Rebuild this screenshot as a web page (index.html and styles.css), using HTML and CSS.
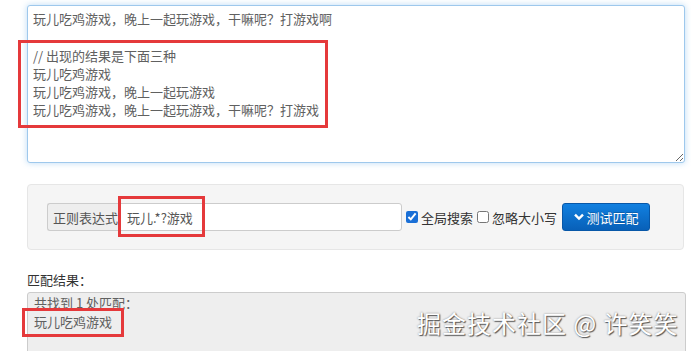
FILE: index.html
```html
<!DOCTYPE html>
<html lang="zh-CN">
  <head>
    <meta charset="UTF-8" />
    <title>正则表达式测试</title>
    <link rel="stylesheet" href="styles.css">
  </head>
  <body>
    <main class="page">
      <!-- Source text -->
      <textarea class="source" spellcheck="false">玩儿吃鸡游戏，晚上一起玩游戏，干嘛呢？打游戏啊

// 出现的结果是下面三种
玩儿吃鸡游戏
玩儿吃鸡游戏，晚上一起玩游戏
玩儿吃鸡游戏，晚上一起玩游戏，干嘛呢？打游戏</textarea>

      <!-- Regex form -->
      <section class="well">
        <span class="addon">正则表达式</span>
        <input class="regex-input" type="text" value="玩儿.*?游戏" />
        <label class="check"><input type="checkbox" checked />全局搜索</label>
        <label class="check"><input type="checkbox" />忽略大小写</label>
        <button class="test-btn">
          <svg class="chev" width="10" height="8" viewBox="0 0 10 8">
            <path d="M1 1.6 L5 5.6 L9 1.6" fill="none" stroke="#fff" stroke-width="2.4" />
          </svg>测试匹配
        </button>
      </section>

      <!-- Results -->
      <div class="result-title">匹配结果：</div>
      <div class="result">
        <div>共找到 1 处匹配：</div>
        <div>玩儿吃鸡游戏</div>
      </div>
    </main>

    <!-- Annotations -->
    <div class="mark mark-1"></div>
    <div class="mark mark-2"></div>
    <div class="mark mark-3"></div>
    <div class="watermark">掘金技术社区 @ 许笑笑</div>
  </body>
</html>
```

FILE: styles.css
```css
/* Reset */
* {
  margin: 0;
  padding: 0;
  box-sizing: border-box;
  font-family: "Noto Sans CJK SC", "Liberation Sans", sans-serif;
}
body {
  background-color: #fff;
  color: #555;
  font-size: 13px;
  overflow: hidden;
  position: relative;
  height: 351px;
}

.page {
  padding: 5px 6px 0 27px;
}

/* Source textarea */
.source {
  display: block;
  width: 658px;
  height: 158px;
  padding: 4px 5px;
  font-size: 13px;
  line-height: 18.3px;
  color: #606060;
  border: 1px solid #9ec8ec;
  border-radius: 3px;
  box-shadow: 0 0 6px rgba(102, 175, 233, 0.45);
  outline: none;
  resize: both;
}

/* Well */
.well {
  width: 657px;
  height: 66px;
  margin-top: 21px;
  padding: 0 19px;
  display: flex;
  align-items: center;
  background-color: #f5f5f5;
  border: 1px solid #e6e6e6;
  border-radius: 4px;
}
.addon {
  width: 71px;
  height: 28px;
  padding-left: 5px;
  display: flex;
  align-items: center;
  background-color: #eee;
  border: 1px solid #ccc;
  border-right: none;
  border-radius: 3px 0 0 3px;
  color: #555;
}
.regex-input {
  width: 284px;
  height: 28px;
  padding: 0 8px;
  font-size: 13px;
  color: #555;
  border: 1px solid #ccc;
  border-radius: 0 3px 3px 0;
  outline: none;
}
.check {
  display: flex;
  align-items: center;
  color: #333;
  font-size: 13px;
}
.check input {
  width: 12px;
  height: 12px;
  margin: 0 3px 0 4px;
  accent-color: #1a6fd6;
}
.test-btn {
  width: 88px;
  height: 28px;
  margin-left: 5px;
  display: flex;
  align-items: center;
  justify-content: center;
  gap: 3px;
  color: #fff;
  font-size: 13px;
  background: linear-gradient(#1180e0, #0860b8);
  border: 1px solid #0757a8;
  border-radius: 3px;
  text-shadow: 0 -1px 0 rgba(0, 0, 0, 0.2);
}

/* Results */
.result-title {
  margin-top: 21px;
  color: #333;
  line-height: 18px;
}
.result {
  width: 659px;
  height: 70px;
  margin-top: 3px;
  padding: 0 6px;
  line-height: 19px;
  background-color: #eee;
  border: 1px solid #ccc;
  border-radius: 3px;
  color: #606060;
}

/* Red annotation boxes */
.mark {
  position: absolute;
  border: 3px solid #e5393b;
}
.mark-1 {
  left: 18px;
  top: 40px;
  width: 310px;
  height: 88px;
}
.mark-2 {
  left: 118px;
  top: 196px;
  width: 87px;
  height: 41px;
}
.mark-3 {
  left: 22px;
  top: 308px;
  width: 102px;
  height: 29px;
}

.watermark {
  position: absolute;
  left: 417px;
  top: 305px;
  font-size: 24px;
  letter-spacing: 1px;
  color: #fff;
  white-space: nowrap;
  text-shadow: 1px 1px 1px #555, 0 0 2px #888;
}
```
